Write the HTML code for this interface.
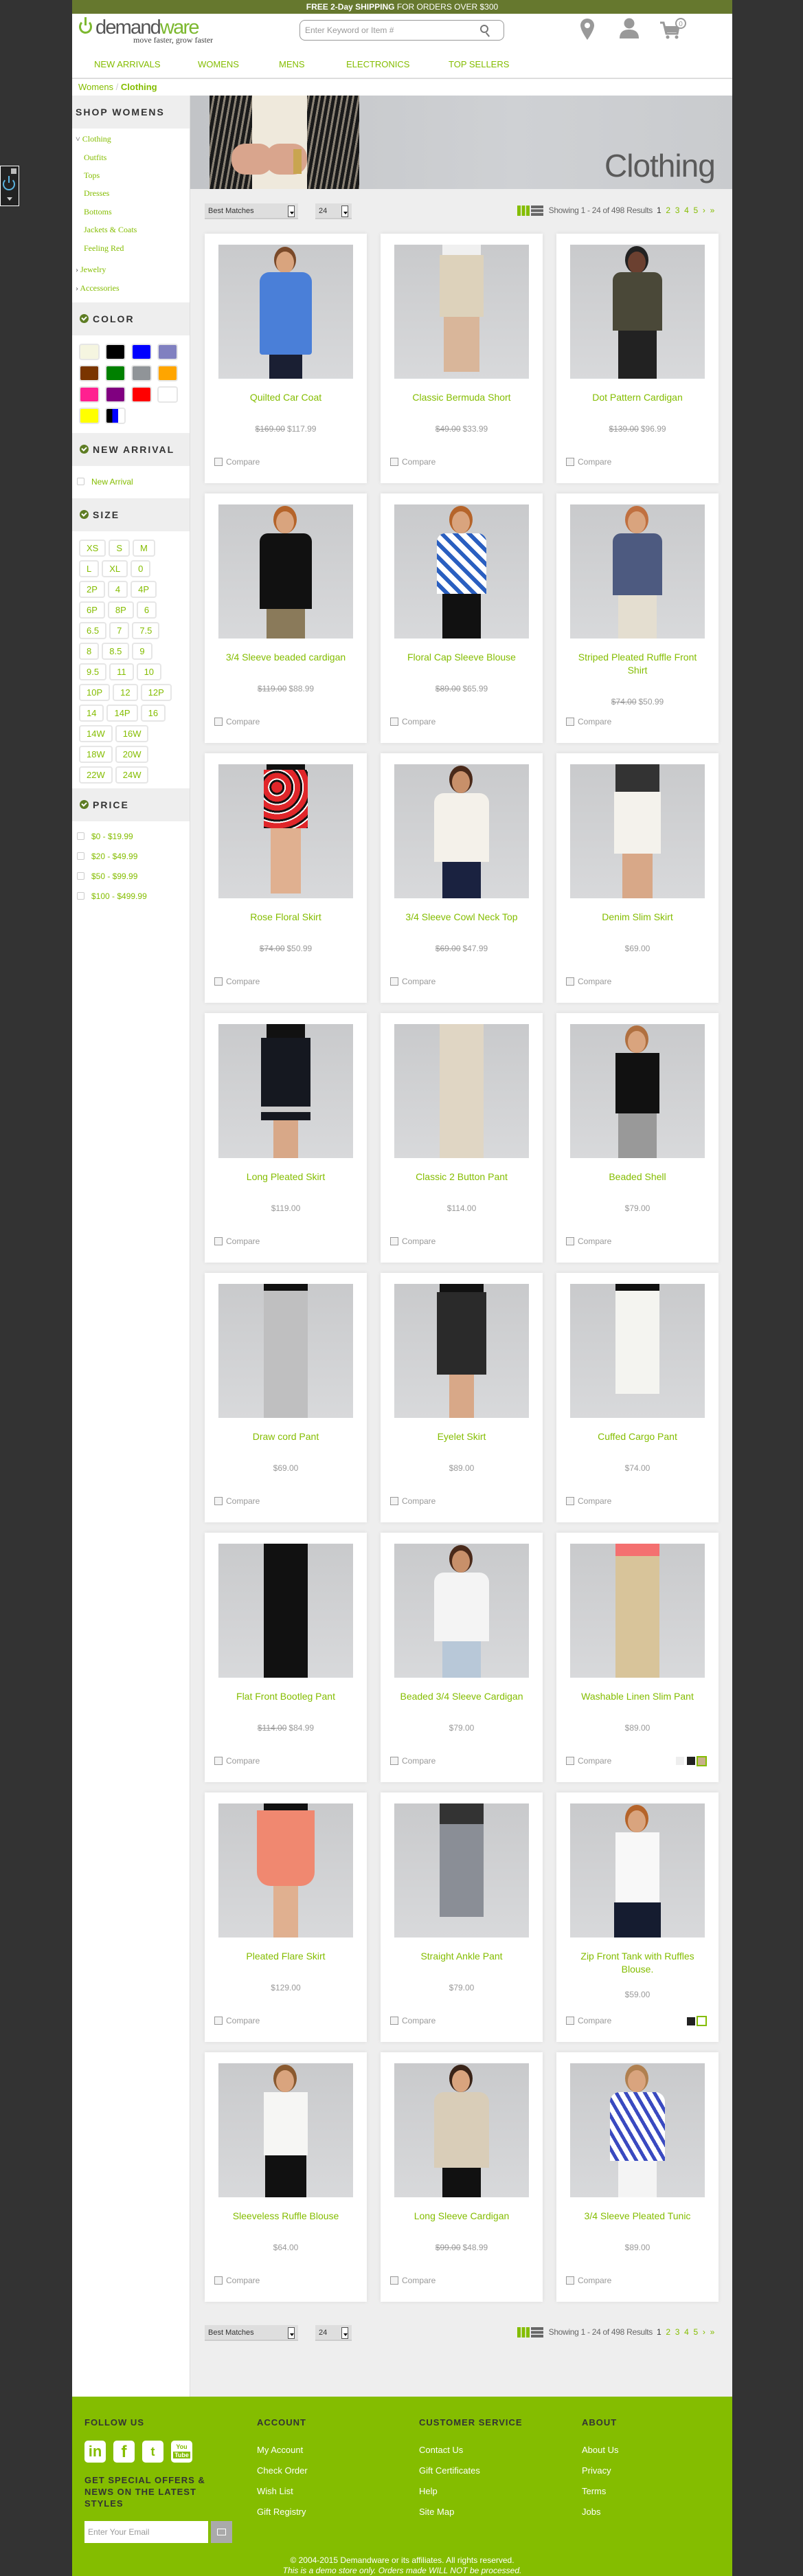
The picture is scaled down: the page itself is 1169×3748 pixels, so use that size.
<!DOCTYPE html>
<html><head><meta charset="utf-8"><style>
*{margin:0;padding:0;box-sizing:border-box}
body{width:1169px;height:3748px;background:#333;font-family:"Liberation Sans",Arial,sans-serif;position:relative;overflow:hidden}
.a{position:absolute}
#wrap{position:absolute;left:105px;top:0;width:961px;height:3748px;background:#fff}
.top{left:0;top:0;width:961px;height:20px;background:#66782e;color:#fff;font-size:12px;text-align:center;line-height:20px}
.nav a{position:absolute;top:86px;font-size:13px;color:#84bd00;text-decoration:none}
#side{left:0;top:139px;width:172px;height:3348px;background:#fff;border-right:1px solid #ddd}
#main{left:172px;top:139px;width:789px;height:3348px;background:#eee}
.sh{position:absolute;left:0;width:171px;height:48px;background:#eee;font-weight:bold;font-size:14px;letter-spacing:2px;color:#333;line-height:48px;padding-left:30px}
.sh i{position:absolute;left:11px;top:17px;width:13px;height:13px;border-radius:50%;background:#5e7d24}
.sh i:after{content:"";position:absolute;left:3px;top:3px;width:5px;height:3px;border-left:2px solid #fff;border-bottom:2px solid #fff;transform:rotate(-45deg)}
.cat{position:absolute;font-family:"Liberation Serif",serif;font-size:12px;color:#84bd00}
.sw{position:absolute;width:30px;height:24px;border:2px solid #e6e6e6;border-radius:4px}
.sz{position:absolute;left:10px;font-size:0}
.sz span{display:inline-block;height:25px;line-height:21px;border:2px solid #e6e6e6;border-radius:4px;font-size:13px;color:#84bd00;padding:0 9px;margin-right:4px}
.cb{position:absolute;width:11px;height:11px;border:1px solid #ccc;border-radius:2px}
.pr{position:absolute;left:28px;font-size:12px;color:#84bd00}
.card{position:absolute;width:236px;height:363px;background:#fff;box-shadow:0 0 6px rgba(0,0,0,.08)}
.im{position:absolute;left:20px;top:16px;width:196px;height:195px;background:linear-gradient(#c9cacc,#d8d9db);overflow:hidden}
.im b{position:absolute;display:block}
.hd{left:84px;top:10px;width:26px;height:32px;border-radius:50%;background:#d9a47e;box-shadow:0 -4px 0 3px #7a4a2a}
.tt{position:absolute;left:20px;top:229px;width:196px;text-align:center;font-size:14px;line-height:19px;color:#84bd00}
.pp{position:absolute;left:0;top:277px;width:236px;text-align:center;font-size:12px;color:#999}
.pp s{margin-right:3px}
.cmp{position:absolute;left:14px;top:325px;font-size:12px;color:#999;padding-left:17px}
.cmp:before{content:"";position:absolute;left:0;top:1px;width:10px;height:10px;border:1px solid #999;background:#f4f4f4}
.tb{position:absolute;height:23px;background:#dedede;border-bottom:2px solid #ccc;font-size:11px;color:#333;line-height:22px;padding-left:5px}
.tb i{position:absolute;right:5px;top:3px;width:10px;height:17px;border:1px solid #555;background:#fff}
.tb i:after{content:"";position:absolute;left:2px;top:8px;border:3px solid transparent;border-top:4px solid #000}
.res{position:absolute;right:26px;font-size:12px;color:#666;white-space:nowrap;letter-spacing:-0.3px;line-height:15px}
.res span{color:#84bd00;margin-left:7px}
.res em{display:inline-block;width:18px;height:15px;vertical-align:top;margin-right:2px}
.fh{position:absolute;top:3517px;font-weight:bold;font-size:13px;letter-spacing:1px;color:#333}
.fl{position:absolute;font-size:13px;color:#fff}
</style></head><body>
<div class="a" style="left:0;top:241px;width:28px;height:59px;background:#222;border:1px solid #fff">
<div class="a" style="left:15px;top:3px;width:8px;height:8px;background:#bbb"></div>
<div class="a" style="left:3px;top:17px;width:18px;height:18px;border:2px solid #5ab4e0;border-radius:50%;border-top-color:transparent"></div>
<div class="a" style="left:11px;top:14px;width:2px;height:10px;background:#5ab4e0"></div>
<div class="a" style="left:9px;top:45px;border:4px solid transparent;border-top:5px solid #ccc"></div>
</div>
<div id="wrap">
<div class="a top"><b>FREE 2-Day SHIPPING</b> FOR ORDERS OVER $300</div>
<div class="a" style="left:10px;top:29px;width:19px;height:20px;border:3px solid #7cb82f;border-radius:50%;border-top-color:transparent"></div>
<div class="a" style="left:18px;top:25px;width:3px;height:12px;background:#7cb82f"></div>
<div class="a" style="left:34px;top:24px;font-size:29px;letter-spacing:-1.8px;color:#555;line-height:32px">demand<span style="color:#7cb82f">ware</span></div>
<div class="a" style="left:89px;top:51px;font-family:'Liberation Serif',serif;font-size:12px;color:#444">move faster, grow faster</div>
<div class="a" style="left:331px;top:29px;width:298px;height:30px;border:1px solid #999;border-radius:8px;font-size:12px;color:#999;line-height:28px;padding-left:7px">Enter Keyword or Item #</div>
<div class="a" style="left:594px;top:36px;width:12px;height:12px;border:2px solid #777;border-radius:50%"></div>
<div class="a" style="left:604px;top:47px;width:2px;height:7px;background:#777;transform:rotate(-40deg)"></div>
<svg class="a" style="left:738px;top:25px" width="160" height="35" viewBox="0 0 160 35">
<path d="M12 2a10 10 0 0 0-10 10c0 7 10 21 10 21s10-14 10-21A10 10 0 0 0 12 2z" fill="#999"/><circle cx="12" cy="12" r="4" fill="#fff"/>
<circle cx="73" cy="9" r="7.5" fill="#999"/><path d="M59 31c0-9 5-13 14-13s14 4 14 13z" fill="#999"/>
<path d="M118 8h5l4 16h16l2-10" fill="none" stroke="#999" stroke-width="3"/><rect x="125" y="13" width="19" height="9" fill="#999"/><circle cx="129" cy="29" r="2.5" fill="#999"/><circle cx="142" cy="29" r="2.5" fill="#999"/>
<circle cx="148" cy="9" r="7" fill="#fff" stroke="#999" stroke-width="2"/><text x="148" y="13" font-size="10" text-anchor="middle" fill="#999" font-family="Liberation Sans">0</text>
</svg>
<div class="nav"><a style="left:32px">NEW ARRIVALS</a><a style="left:183px">WOMENS</a><a style="left:301px">MENS</a><a style="left:399px">ELECTRONICS</a><a style="left:548px">TOP SELLERS</a></div>
<div class="a" style="left:0;top:113px;width:961px;height:2px;background:#ddd"></div>
<div class="a" style="left:9px;top:119px;font-size:13px;color:#84bd00">Womens <span style="color:#ccc">/</span> <b>Clothing</b></div>

<div id="side" class="a">
<div class="sh" style="top:0;padding-left:5px">SHOP WOMENS</div>
<div class="cat" style="left:5px;top:56px"><span style="color:#555">˅</span> Clothing</div>
<div class="cat" style="left:17px;top:83px">Outfits</div>
<div class="cat" style="left:17px;top:109px">Tops</div>
<div class="cat" style="left:17px;top:135px">Dresses</div>
<div class="cat" style="left:17px;top:162px">Bottoms</div>
<div class="cat" style="left:17px;top:188px">Jackets &amp; Coats</div>
<div class="cat" style="left:17px;top:215px">Feeling Red</div>
<div class="cat" style="left:5px;top:246px"><span style="color:#555">›</span> Jewelry</div>
<div class="cat" style="left:5px;top:273px"><span style="color:#555">›</span> Accessories</div>
<div class="sh" style="top:301px"><i></i>COLOR</div>
<div class="sw" style="left:10px;top:361px;background:#f5f5e0"></div><div class="sw" style="left:48px;top:361px;background:#000"></div><div class="sw" style="left:86px;top:361px;background:#00f"></div><div class="sw" style="left:124px;top:361px;background:#8080c0"></div>
<div class="sw" style="left:10px;top:392px;background:#7a3500"></div><div class="sw" style="left:48px;top:392px;background:#008000"></div><div class="sw" style="left:86px;top:392px;background:#909498"></div><div class="sw" style="left:124px;top:392px;background:#ffa500"></div>
<div class="sw" style="left:10px;top:423px;background:#ff2090"></div><div class="sw" style="left:48px;top:423px;background:#800080"></div><div class="sw" style="left:86px;top:423px;background:#f00"></div><div class="sw" style="left:124px;top:423px;background:#fff"></div>
<div class="sw" style="left:10px;top:454px;background:#ff0"></div><div class="sw" style="left:48px;top:454px;background:linear-gradient(90deg,#000 33%,#00f 33%,#00f 66%,#fff 66%)"></div>
<div class="sh" style="top:491px"><i></i>NEW ARRIVAL</div>
<div class="cb" style="left:7px;top:556px"></div><div class="pr" style="top:555px">New Arrival</div>
<div class="sh" style="top:586px"><i></i>SIZE</div>
<div class="sz" style="top:646px"><span>XS</span><span>S</span><span>M</span></div>
<div class="sz" style="top:676px"><span>L</span><span>XL</span><span>0</span></div>
<div class="sz" style="top:706px"><span>2P</span><span>4</span><span>4P</span></div>
<div class="sz" style="top:736px"><span>6P</span><span>8P</span><span>6</span></div>
<div class="sz" style="top:766px"><span>6.5</span><span>7</span><span>7.5</span></div>
<div class="sz" style="top:796px"><span>8</span><span>8.5</span><span>9</span></div>
<div class="sz" style="top:826px"><span>9.5</span><span>11</span><span>10</span></div>
<div class="sz" style="top:856px"><span>10P</span><span>12</span><span>12P</span></div>
<div class="sz" style="top:886px"><span>14</span><span>14P</span><span>16</span></div>
<div class="sz" style="top:916px"><span>14W</span><span>16W</span></div>
<div class="sz" style="top:946px"><span>18W</span><span>20W</span></div>
<div class="sz" style="top:976px"><span>22W</span><span>24W</span></div>
<div class="sh" style="top:1008px"><i></i>PRICE</div>
<div class="cb" style="left:7px;top:1072px"></div><div class="pr" style="top:1071px">$0 - $19.99</div>
<div class="cb" style="left:7px;top:1101px"></div><div class="pr" style="top:1100px">$20 - $49.99</div>
<div class="cb" style="left:7px;top:1130px"></div><div class="pr" style="top:1129px">$50 - $99.99</div>
<div class="cb" style="left:7px;top:1159px"></div><div class="pr" style="top:1158px">$100 - $499.99</div>
</div>

<div id="main" class="a">
<div class="a" style="left:0;top:0;width:789px;height:136px;background:linear-gradient(90deg,#c2c4c7,#cfd1d4 60%,#c9cbce);overflow:hidden">
<div class="a" style="left:28px;top:0;width:218px;height:136px;background:repeating-linear-gradient(100deg,#1a1a1a 0 5px,#8a8275 5px 8px)"></div>
<div class="a" style="left:90px;top:0;width:80px;height:136px;background:#efe9dc"></div>
<div class="a" style="left:60px;top:70px;width:60px;height:45px;border-radius:20px;background:#d9a58d"></div>
<div class="a" style="left:110px;top:70px;width:60px;height:45px;border-radius:20px;background:#d9a58d"></div>
<div class="a" style="left:150px;top:78px;width:12px;height:36px;background:#c9a550"></div>
<div class="a" style="left:603px;top:74px;font-size:46px;color:#5a5a5a;letter-spacing:-1px;line-height:56px">Clothing</div>
</div>
<div class="tb" style="left:21px;top:157px;width:136px">Best Matches<i></i></div>
<div class="tb" style="left:182px;top:157px;width:53px">24<i></i></div>
<div class="res" style="top:160px"><em style="background:repeating-linear-gradient(90deg,#84bd00 0 5px,transparent 5px 6.5px)"></em><em style="background:repeating-linear-gradient(#666 0 4px,transparent 4px 5.5px);margin-right:8px"></em>Showing 1 - 24 of 498 Results <b style="font-weight:normal;color:#333;margin-left:3px">1</b><span>2</span><span>3</span><span>4</span><span>5</span><span>›</span><span>»</span></div>
<div class="tb" style="left:21px;top:3244px;width:136px">Best Matches<i></i></div>
<div class="tb" style="left:182px;top:3244px;width:53px">24<i></i></div>
<div class="res" style="top:3247px"><em style="background:repeating-linear-gradient(90deg,#84bd00 0 5px,transparent 5px 6.5px)"></em><em style="background:repeating-linear-gradient(#666 0 4px,transparent 4px 5.5px);margin-right:8px"></em>Showing 1 - 24 of 498 Results <b style="font-weight:normal;color:#333;margin-left:3px">1</b><span>2</span><span>3</span><span>4</span><span>5</span><span>›</span><span>»</span></div>
</div>

<div class="card" style="left:193px;top:340px"><div class="im"><b class="hd"></b><b style="left:60px;top:40px;width:76px;height:120px;background:#4a7fd8;border-radius:14px 14px 4px 4px"></b><b style="left:74px;top:160px;width:48px;height:35px;background:#1a1f33"></b></div><div class="tt">Quilted Car Coat</div><div class="pp"><s>$169.00</s>$117.99</div><div class="cmp">Compare</div></div>
<div class="card" style="left:449px;top:340px"><div class="im"><b style="left:70px;top:0;width:56px;height:15px;background:#f0f0f0"></b><b style="left:66px;top:15px;width:64px;height:90px;background:#ddd2bb"></b><b style="left:72px;top:105px;width:52px;height:80px;background:#d9b69a"></b></div><div class="tt">Classic Bermuda Short</div><div class="pp"><s>$49.00</s>$33.99</div><div class="cmp">Compare</div></div>
<div class="card" style="left:705px;top:340px"><div class="im"><b class="hd" style="background:#6b4030;box-shadow:0 -4px 0 4px #222"></b><b style="left:62px;top:40px;width:72px;height:85px;background:#4a4838;border-radius:12px 12px 0 0"></b><b style="left:70px;top:125px;width:56px;height:70px;background:#222"></b></div><div class="tt">Dot Pattern Cardigan</div><div class="pp"><s>$139.00</s>$96.99</div><div class="cmp">Compare</div></div>

<div class="card" style="left:193px;top:718px"><div class="im"><b class="hd" style="box-shadow:0 -4px 0 4px #b5642a"></b><b style="left:60px;top:42px;width:76px;height:110px;background:#111;border-radius:12px 12px 0 0"></b><b style="left:70px;top:152px;width:56px;height:43px;background:#8a7a5a"></b></div><div class="tt">3/4 Sleeve beaded cardigan</div><div class="pp"><s>$119.00</s>$88.99</div><div class="cmp">Compare</div></div>
<div class="card" style="left:449px;top:718px"><div class="im"><b class="hd" style="box-shadow:0 -4px 0 4px #b5642a"></b><b style="left:62px;top:42px;width:72px;height:88px;background:repeating-linear-gradient(45deg,#fff 0 8px,#2a5fc0 8px 14px);border-radius:12px 12px 0 0"></b><b style="left:70px;top:130px;width:56px;height:65px;background:#111"></b></div><div class="tt">Floral Cap Sleeve Blouse</div><div class="pp"><s>$89.00</s>$65.99</div><div class="cmp">Compare</div></div>
<div class="card" style="left:705px;top:718px"><div class="im"><b class="hd" style="box-shadow:0 -4px 0 4px #c07040"></b><b style="left:62px;top:42px;width:72px;height:90px;background:#4d5a80;border-radius:12px 12px 0 0"></b><b style="left:70px;top:132px;width:56px;height:63px;background:#e4ded0"></b></div><div class="tt">Striped Pleated Ruffle Front Shirt</div><div class="pp" style="top:296px"><s>$74.00</s>$50.99</div><div class="cmp">Compare</div></div>

<div class="card" style="left:193px;top:1096px"><div class="im"><b style="left:70px;top:0;width:56px;height:8px;background:#111"></b><b style="left:66px;top:8px;width:64px;height:85px;background:repeating-radial-gradient(circle at 30% 30%,#e0262a 0 8px,#111 8px 11px,#fff 11px 13px)"></b><b style="left:76px;top:93px;width:44px;height:95px;background:#e0b090"></b></div><div class="tt">Rose Floral Skirt</div><div class="pp"><s>$74.00</s>$50.99</div><div class="cmp">Compare</div></div>
<div class="card" style="left:449px;top:1096px"><div class="im"><b class="hd" style="background:#c8906a;box-shadow:0 -4px 0 4px #4a2a1a"></b><b style="left:58px;top:42px;width:80px;height:100px;background:#f4f1ea;border-radius:14px 14px 0 0"></b><b style="left:70px;top:142px;width:56px;height:53px;background:#1a2240"></b></div><div class="tt">3/4 Sleeve Cowl Neck Top</div><div class="pp"><s>$69.00</s>$47.99</div><div class="cmp">Compare</div></div>
<div class="card" style="left:705px;top:1096px"><div class="im"><b style="left:66px;top:0;width:64px;height:40px;background:#333"></b><b style="left:64px;top:40px;width:68px;height:90px;background:#f4f2ec"></b><b style="left:76px;top:130px;width:44px;height:65px;background:#d8a888"></b></div><div class="tt">Denim Slim Skirt</div><div class="pp">$69.00</div><div class="cmp">Compare</div></div>

<div class="card" style="left:193px;top:1474px"><div class="im"><b style="left:70px;top:0;width:56px;height:20px;background:#111"></b><b style="left:62px;top:20px;width:72px;height:120px;background:#151820"></b><b style="left:62px;top:120px;width:72px;height:8px;background:#ccc"></b><b style="left:80px;top:140px;width:36px;height:55px;background:#d8a888"></b></div><div class="tt">Long Pleated Skirt</div><div class="pp">$119.00</div><div class="cmp">Compare</div></div>
<div class="card" style="left:449px;top:1474px"><div class="im"><b style="left:66px;top:0;width:64px;height:195px;background:#e0d6c4"></b></div><div class="tt">Classic 2 Button Pant</div><div class="pp">$114.00</div><div class="cmp">Compare</div></div>
<div class="card" style="left:705px;top:1474px"><div class="im"><b class="hd" style="box-shadow:0 -4px 0 4px #b07040"></b><b style="left:66px;top:42px;width:64px;height:88px;background:#111"></b><b style="left:70px;top:130px;width:56px;height:65px;background:#999"></b></div><div class="tt">Beaded Shell</div><div class="pp">$79.00</div><div class="cmp">Compare</div></div>

<div class="card" style="left:193px;top:1852px"><div class="im"><b style="left:66px;top:0;width:64px;height:10px;background:#111"></b><b style="left:66px;top:10px;width:64px;height:185px;background:#bfbfc0"></b></div><div class="tt">Draw cord Pant</div><div class="pp">$69.00</div><div class="cmp">Compare</div></div>
<div class="card" style="left:449px;top:1852px"><div class="im"><b style="left:66px;top:0;width:64px;height:12px;background:#111"></b><b style="left:62px;top:12px;width:72px;height:120px;background:#2a2a2a"></b><b style="left:80px;top:132px;width:36px;height:63px;background:#d8a888"></b></div><div class="tt">Eyelet Skirt</div><div class="pp">$89.00</div><div class="cmp">Compare</div></div>
<div class="card" style="left:705px;top:1852px"><div class="im"><b style="left:66px;top:0;width:64px;height:10px;background:#111"></b><b style="left:66px;top:10px;width:64px;height:150px;background:#f4f4f0"></b></div><div class="tt">Cuffed Cargo Pant</div><div class="pp">$74.00</div><div class="cmp">Compare</div></div>

<div class="card" style="left:193px;top:2230px"><div class="im"><b style="left:66px;top:0;width:64px;height:195px;background:#111"></b></div><div class="tt">Flat Front Bootleg Pant</div><div class="pp"><s>$114.00</s>$84.99</div><div class="cmp">Compare</div></div>
<div class="card" style="left:449px;top:2230px"><div class="im"><b class="hd" style="background:#c8906a;box-shadow:0 -4px 0 4px #4a2a1a"></b><b style="left:58px;top:42px;width:80px;height:100px;background:#f4f4f4;border-radius:14px 14px 0 0"></b><b style="left:70px;top:142px;width:56px;height:53px;background:#b8c8d8"></b></div><div class="tt">Beaded 3/4 Sleeve Cardigan</div><div class="pp">$79.00</div><div class="cmp">Compare</div></div>
<div class="card" style="left:705px;top:2230px"><div class="im"><b style="left:66px;top:0;width:64px;height:18px;background:#f47070"></b><b style="left:66px;top:18px;width:64px;height:177px;background:#d8c49a"></b></div><div class="tt">Washable Linen Slim Pant</div><div class="pp">$89.00</div><div class="cmp">Compare</div>
<div class="a" style="left:174px;top:326px;width:12px;height:12px;background:#eee"></div><div class="a" style="left:190px;top:326px;width:12px;height:12px;background:#222"></div><div class="a" style="left:204px;top:325px;width:15px;height:15px;border:2px solid #84bd00;background:#c8b08a"></div></div>

<div class="card" style="left:193px;top:2608px"><div class="im"><b style="left:66px;top:0;width:64px;height:10px;background:#111"></b><b style="left:56px;top:10px;width:84px;height:110px;background:#f08870;border-radius:0 0 20px 20px"></b><b style="left:80px;top:120px;width:36px;height:75px;background:#e0b090"></b></div><div class="tt">Pleated Flare Skirt</div><div class="pp">$129.00</div><div class="cmp">Compare</div></div>
<div class="card" style="left:449px;top:2608px"><div class="im"><b style="left:66px;top:0;width:64px;height:30px;background:#333"></b><b style="left:66px;top:30px;width:64px;height:135px;background:#8a8e96"></b></div><div class="tt">Straight Ankle Pant</div><div class="pp">$79.00</div><div class="cmp">Compare</div></div>
<div class="card" style="left:705px;top:2608px"><div class="im"><b class="hd" style="box-shadow:0 -4px 0 4px #b5642a"></b><b style="left:66px;top:42px;width:64px;height:102px;background:#f8f8f8"></b><b style="left:64px;top:144px;width:68px;height:51px;background:#151c30"></b></div><div class="tt">Zip Front Tank with Ruffles Blouse.</div><div class="pp" style="top:287px">$59.00</div><div class="cmp">Compare</div>
<div class="a" style="left:190px;top:327px;width:12px;height:12px;background:#222"></div><div class="a" style="left:204px;top:325px;width:15px;height:15px;border:2px solid #84bd00;background:#fff"></div></div>

<div class="card" style="left:193px;top:2986px"><div class="im"><b class="hd" style="box-shadow:0 -4px 0 4px #8a5a30"></b><b style="left:66px;top:42px;width:64px;height:92px;background:#f6f6f4"></b><b style="left:68px;top:134px;width:60px;height:61px;background:#111"></b></div><div class="tt">Sleeveless Ruffle Blouse</div><div class="pp">$64.00</div><div class="cmp">Compare</div></div>
<div class="card" style="left:449px;top:2986px"><div class="im"><b class="hd" style="box-shadow:0 -4px 0 4px #3a2418"></b><b style="left:58px;top:42px;width:80px;height:110px;background:#d9cdb8;border-radius:14px 14px 0 0"></b><b style="left:70px;top:152px;width:56px;height:43px;background:#111"></b></div><div class="tt">Long Sleeve Cardigan</div><div class="pp"><s>$99.00</s>$48.99</div><div class="cmp">Compare</div></div>
<div class="card" style="left:705px;top:2986px"><div class="im"><b class="hd" style="box-shadow:0 -4px 0 4px #b08050"></b><b style="left:58px;top:42px;width:80px;height:100px;background:repeating-linear-gradient(60deg,#fff 0 7px,#3a4ac0 7px 12px);border-radius:14px 14px 0 0"></b><b style="left:70px;top:142px;width:56px;height:53px;background:#f4f4f4"></b></div><div class="tt">3/4 Sleeve Pleated Tunic</div><div class="pp">$89.00</div><div class="cmp">Compare</div></div>

<div class="a" style="left:0;top:3487px;width:961px;height:261px;background:#84bd00"></div>
<div class="fh" style="left:18px">FOLLOW US</div>
<div class="fh" style="left:269px">ACCOUNT</div>
<div class="fh" style="left:505px">CUSTOMER SERVICE</div>
<div class="fh" style="left:742px">ABOUT</div>
<div class="a" style="left:18px;top:3551px;width:31px;height:32px;border-radius:5px;background:#fff;color:#84bd00;font-weight:bold;font-size:22px;text-align:center;line-height:32px">in</div>
<div class="a" style="left:60px;top:3551px;width:31px;height:32px;border-radius:5px;background:#fff;color:#84bd00;font-weight:bold;font-size:24px;text-align:center;line-height:34px">f</div>
<div class="a" style="left:102px;top:3551px;width:31px;height:32px;border-radius:5px;background:#fff;color:#84bd00;font-weight:bold;font-size:18px;text-align:center;line-height:32px">t</div>
<div class="a" style="left:144px;top:3551px;width:31px;height:32px;border-radius:5px;background:#fff;color:#84bd00;font-weight:bold;font-size:9px;text-align:center;line-height:12px;padding-top:3px">You<br><span style="background:#84bd00;color:#fff;padding:0 2px">Tube</span></div>
<div class="a" style="left:18px;top:3600px;width:200px;font-weight:bold;font-size:13px;letter-spacing:1px;line-height:17px;color:#333">GET SPECIAL OFFERS &amp; NEWS ON THE LATEST STYLES</div>
<div class="a" style="left:18px;top:3668px;width:180px;height:32px;background:#fff;font-size:12px;color:#999;line-height:32px;padding-left:5px">Enter Your Email</div>
<div class="a" style="left:202px;top:3668px;width:31px;height:32px;background:#aaa"><div class="a" style="left:9px;top:11px;width:13px;height:10px;border:1px solid #fff"></div></div>
<div class="fl" style="left:269px;top:3557px">My Account</div><div class="fl" style="left:269px;top:3587px">Check Order</div><div class="fl" style="left:269px;top:3617px">Wish List</div><div class="fl" style="left:269px;top:3647px">Gift Registry</div>
<div class="fl" style="left:505px;top:3557px">Contact Us</div><div class="fl" style="left:505px;top:3587px">Gift Certificates</div><div class="fl" style="left:505px;top:3617px">Help</div><div class="fl" style="left:505px;top:3647px">Site Map</div>
<div class="fl" style="left:742px;top:3557px">About Us</div><div class="fl" style="left:742px;top:3587px">Privacy</div><div class="fl" style="left:742px;top:3617px">Terms</div><div class="fl" style="left:742px;top:3647px">Jobs</div>
<div class="a" style="left:0;top:3718px;width:961px;text-align:center;font-size:12px;color:#fff;line-height:15px">© 2004-2015 Demandware or its affiliates. All rights reserved.<br><i>This is a demo store only. Orders made WILL NOT be processed.</i></div>
</div>
</body></html>
